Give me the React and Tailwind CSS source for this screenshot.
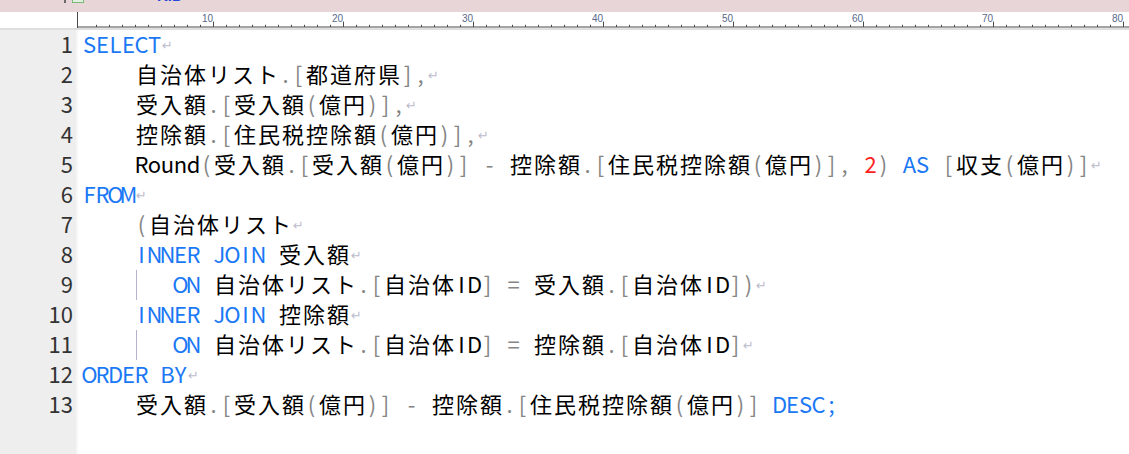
import React from "react";

const lines = [
  [["k", "SELECT"], "NL"],
  [["t", "    自治体リスト"], ["p", ".["], ["t", "都道府県"], ["p", "],"], "NL"],
  [["t", "    受入額"], ["p", ".["], ["t", "受入額"], ["p", "("], ["t", "億円"], ["p", ")],"], "NL"],
  [["t", "    控除額"], ["p", ".["], ["t", "住民税控除額"], ["p", "("], ["t", "億円"], ["p", ")],"], "NL"],
  [
    ["t", "    Round"], ["p", "("], ["t", "受入額"], ["p", ".["], ["t", "受入額"], ["p", "("], ["t", "億円"], ["p", ")]"],
    ["t", " "], ["p", "-"], ["t", " 控除額"], ["p", ".["], ["t", "住民税控除額"], ["p", "("], ["t", "億円"], ["p", ")],"],
    ["t", " "], ["r", "2"], ["p", ")"], ["t", " "], ["k", "AS"], ["t", " "], ["p", "["], ["t", "収支"], ["p", "("], ["t", "億円"], ["p", ")]"],
    "NL",
  ],
  [["k", "FROM"], "NL"],
  [["t", "    "], ["p", "("], ["t", "自治体リスト"], "NL"],
  [["t", "    "], ["k", "INNER JOIN"], ["t", " 受入額"], "NL"],
  [
    ["t", "    "], ["g"], ["t", "  "], ["k", "ON"], ["t", " 自治体リスト"], ["p", ".["], ["t", "自治体ID"], ["p", "]"],
    ["t", " "], ["p", "="], ["t", " 受入額"], ["p", ".["], ["t", "自治体ID"], ["p", "])"], "NL",
  ],
  [["t", "    "], ["k", "INNER JOIN"], ["t", " 控除額"], "NL"],
  [
    ["t", "    "], ["g"], ["t", "  "], ["k", "ON"], ["t", " 自治体リスト"], ["p", ".["], ["t", "自治体ID"], ["p", "]"],
    ["t", " "], ["p", "="], ["t", " 控除額"], ["p", ".["], ["t", "自治体ID"], ["p", "]"], "NL",
  ],
  [["k", "ORDER BY"], "NL"],
  [
    ["t", "    受入額"], ["p", ".["], ["t", "受入額"], ["p", "("], ["t", "億円"], ["p", ")]"],
    ["t", " "], ["p", "-"], ["t", " 控除額"], ["p", ".["], ["t", "住民税控除額"], ["p", "("], ["t", "億円"], ["p", ")]"],
    ["t", " "], ["k", "DESC;"],
  ],
];

const colorOf = {
  k: "text-[#1a78f5]",
  t: "text-[#000000]",
  p: "text-[#858585]",
  r: "text-[#ff1e1e]",
};

const FONT = { fontFamily: '"Noto Sans CJK JP", "Noto Sans", sans-serif' };

function Cell({ ch, color }) {
  const wide = ch.charCodeAt(0) > 0x2000;
  return (
    <span
      className={`flex justify-center shrink-0 h-[30px] leading-[26px] whitespace-pre ${wide ? "w-[24px]" : "w-[13px]"} ${color}`}
    >
      {ch === " " ? "" : ch}
    </span>
  );
}

function CodeLine({ tokens }) {
  const cells = [];
  tokens.forEach((tok, i) => {
    if (tok === "NL") {
      cells.push(
        <span
          key={`nl${i}`}
          className="flex justify-center shrink-0 w-[13px] h-[30px] leading-[26px] pt-[3px] text-[13px] text-[#bcbccc]"
          style={{ fontFamily: '"DejaVu Sans", sans-serif' }}
        >
          ↵
        </span>
      );
      return;
    }
    if (tok[0] === "g") {
      cells.push(
        <span key={`g${i}`} className="flex shrink-0 w-[13px] h-[30px] pl-[1px]">
          <span className="w-px h-full bg-[#b4b4cc]" />
        </span>
      );
      return;
    }
    const [kind, text] = tok;
    Array.from(text).forEach((ch, j) => {
      cells.push(<Cell key={`${i}-${j}`} ch={ch} color={colorOf[kind]} />);
    });
  });
  return <div className="flex h-[30px] text-[22px]">{cells}</div>;
}

function Ruler() {
  const ticks = [];
  for (let n = 1; n <= 81; n++) {
    const x = 5 + 13 * n;
    const major = n % 10 === 0;
    ticks.push(
      <line key={n} x1={x + 0.5} x2={x + 0.5} y1={major ? 0.5 : 3.8} y2={6} stroke="#4a4a4a" strokeWidth="1" />
    );
  }
  const labels = [10, 20, 30, 40, 50, 60, 70, 80];
  return (
    <div className="h-[16px] bg-white flex">
      <div className="w-[77px] shrink-0" />
      <div className="flex-1 flex flex-col border-l border-[#4a4a4a]">
        <div className="h-[9px] flex pl-[5px] overflow-visible">
          {labels.map((l) => (
            <div
              key={l}
              className="w-[130px] shrink-0 text-right text-[10px] leading-none pt-[2px] text-[#5a6a8a]"
              style={{ fontFamily: '"Liberation Sans", Arial, sans-serif' }}
            >
              {l}
            </div>
          ))}
        </div>
        <svg width="1052" height="7" className="block">
          {ticks}
          <line x1="0" x2="1052" y1="6" y2="6" stroke="#4a4a4a" strokeWidth="1.2" />
        </svg>
      </div>
    </div>
  );
}

export default function App() {
  return (
    <div className="w-[1129px] h-[454px] bg-white flex flex-col overflow-hidden" style={FONT}>
      {/* top strip */}
      <div className="h-[12px] bg-[#e8d5d7] flex items-start overflow-hidden shrink-0">
        <div className="ml-[64px] -mt-[8px] w-[2px] h-[11px] bg-[#6a6a6a]" />
        <div className="ml-[6px] -mt-[8px] w-[12px] h-[11px] border border-[#7ab87a] bg-[#dff0df]" />
        <div
          className="ml-[73px] -mt-[12px] text-[15px] font-bold leading-[15px] text-[#2448d8]"
          style={{ fontFamily: '"Liberation Sans", Arial, sans-serif' }}
        >
          KID
        </div>
      </div>
      <Ruler />
      <div className="h-[2px] bg-[#dedede] shrink-0" />
      {/* body */}
      <div className="flex-1 flex">
        <div className="w-[76px] bg-[#eeeeee] flex flex-col shrink-0">
          {lines.map((_, i) => (
            <div key={i} className="h-[30px] leading-[26px] text-right pr-[3px] text-[22px] text-[#333333]">
              {i + 1}
            </div>
          ))}
        </div>
        <div className="w-[2px] bg-[#f7f7f7] shrink-0" />
        <div className="flex-1 flex flex-col pl-[5px]">
          {lines.map((tokens, i) => (
            <CodeLine key={i} tokens={tokens} />
          ))}
        </div>
      </div>
    </div>
  );
}
